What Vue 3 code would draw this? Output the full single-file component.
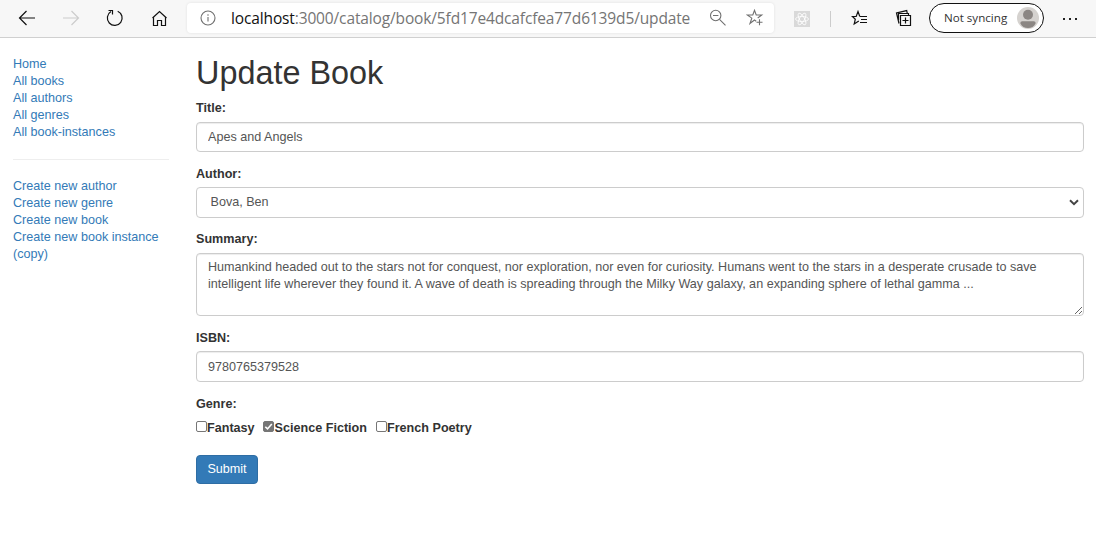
<script setup>
import { ref } from 'vue'

const catalogLinks = ['Home', 'All books', 'All authors', 'All genres', 'All book-instances']
const createLinks = ['Create new author', 'Create new genre', 'Create new book', 'Create new book instance (copy)']
const title = ref('Apes and Angels')
const author = ref('Bova, Ben')
const summary = ref('Humankind headed out to the stars not for conquest, nor exploration, nor even for curiosity. Humans went to the stars in a desperate crusade to save intelligent life wherever they found it. A wave of death is spreading through the Milky Way galaxy, an expanding sphere of lethal gamma ...')
const isbn = ref('9780765379528')
const genres = ref([
  { name: 'Fantasy', checked: false },
  { name: 'Science Fiction', checked: true },
  { name: 'French Poetry', checked: false },
])
</script>

<template>
  <div class="window">
    <header class="toolbar">
      <nav class="nav-icons">
        <svg class="arrow" width="18" height="18" viewBox="0 0 18 18"><path d="M17 9H1.500M8.500 2 1.500 9l7 7" /></svg>
        <svg class="arrow disabled" width="18" height="18" viewBox="0 0 18 18"><path d="M1 9h15.500M9.500 2l7 7-7 7" /></svg>
        <svg width="18" height="18" viewBox="0 0 18 18"><path d="M11.700 2.200A7.400 7.400 0 1 1 5 2.600M2.500 1.500h4v4" /></svg>
        <svg width="18" height="18" viewBox="0 0 18 18"><path d="m2.500 9 7-6.500 7 6.500M3.500 8.200v8.300h4v-5h4v5h4V8.200" /></svg>
      </nav>
      <div class="address">
        <svg class="info" width="16" height="16" viewBox="0 0 16 16"><circle cx="8" cy="8" r="7" /><path d="M8 7v4.500M8 4.300v1.400" /></svg>
        <span class="url"><b>localhost</b>:3000/catalog/book/5fd17e4dcafcfea77d6139d5/update</span>
        <svg class="zoom" width="18" height="18" viewBox="0 0 18 18"><circle cx="6.700" cy="6.500" r="5.200" /><path d="M4 6.500h5.400M10.500 10.300l6 6" /></svg>
        <svg class="star" width="18" height="18" viewBox="0 0 18 18"><path d="M10.200 12.200 8.500 11 4 14.500l1.800-5.400L1.300 6h5.500l1.700-4.700L10.200 6h5.500l-4 3M13.500 10.300v6M10.500 13.300h6" /></svg>
      </div>
      <svg class="react" width="16" height="16" viewBox="0 0 16 16"><path class="tile" d="M0 0h16v16H0z" /><g><ellipse cx="8" cy="8" rx="6.500" ry="2.500" /><ellipse cx="8" cy="8" rx="6.500" ry="2.500" transform="rotate(60 8 8)" /><ellipse cx="8" cy="8" rx="6.500" ry="2.500" transform="rotate(120 8 8)" /></g></svg>
      <i class="divider"></i>
      <svg class="favorites" width="18" height="18" viewBox="0 0 18 18"><path d="M9 7.500h7M10 10.500h6M9 13.500h7M8.800 7.500 7 2.500 5.200 7.500H1.500L4.300 10.200 3.200 15 7.800 12" /></svg>
      <svg class="collections" width="18" height="18" viewBox="0 0 18 18"><path d="M5.500 6.500h10v10h-10zM10.500 8.500v6M7.500 11.500h6M4 14.500 1.500 4l10.200-2.400.5 2.400M3.500 11V4.500h10v2" /></svg>
      <div class="profile">
        <span>Not syncing</span>
        <svg width="22" height="22" viewBox="0 0 22 22"><circle cx="11" cy="11" r="11" fill="#d5d2cf" /><circle cx="11" cy="7.800" r="5" fill="#8b8683" /><path d="M3.300 16.200q0-2 2-2h11.400q2 0 2 2C17 19.700 14.500 21 11 21s-6-1.300-7.700-4.800Z" fill="#8b8683" /></svg>
      </div>
      <svg class="more" width="16" height="4" viewBox="0 0 16 4"><path d="M1 1h2v2H1zM7 1h2v2H7zM13 1h2v2h-2z" /></svg>
    </header>

    <div class="page">
      <aside>
        <ul><li v-for="link in catalogLinks" :key="link"><a>{{ link }}</a></li></ul>
        <hr />
        <ul><li v-for="link in createLinks" :key="link"><a>{{ link }}</a></li></ul>
      </aside>
      <main>
        <h1>Update Book</h1>
        <form @submit.prevent>
          <div class="group title">
            <label for="title">Title:</label>
            <input id="title" v-model="title" class="control" />
          </div>
          <div class="group author">
            <label for="author">Author:</label>
            <div class="select">
              <select id="author" v-model="author" class="control"><option>Bova, Ben</option></select>
              <svg width="10" height="7" viewBox="0 0 10 7"><path d="M1 1.300 5 5.100l4-3.800" /></svg>
            </div>
          </div>
          <div class="group summary">
            <label for="summary">Summary:</label>
            <textarea id="summary" v-model="summary" class="control" spellcheck="false"></textarea>
          </div>
          <div class="group isbn">
            <label for="isbn">ISBN:</label>
            <input id="isbn" v-model="isbn" class="control" />
          </div>
          <div class="group genre">
            <label>Genre:</label>
            <div class="checks">
              <label v-for="g in genres" :key="g.name" class="check">
                <input v-model="g.checked" type="checkbox" />
                <svg width="11" height="11" viewBox="0 0 11 11" :class="{ on: g.checked }"><rect x=".5" y=".5" width="10" height="10" rx="1.500" /><path v-if="g.checked" d="m2.300 5.700 2.200 2.200 4.300-5" /></svg>
                <span>{{ g.name }}</span>
              </label>
            </div>
          </div>
          <button type="submit">Submit</button>
        </form>
      </main>
    </div>
  </div>
</template>

<style>
body { margin: 0; background: #fff; overflow: hidden; }
</style>

<style scoped>
* { box-sizing: border-box; }
.window { height: 537px; overflow: hidden; font: 12.6px/17px "Liberation Sans", Arial, sans-serif; color: #333; }
svg { display: block; flex: none; fill: none; stroke: #111; stroke-width: 1.2; }
.toolbar { height: 38px; display: flex; align-items: center; background: #f7f7f7; border-bottom: 1px solid #d0d0d0; font-family: "Open Sans", "Noto Sans", sans-serif; }
.nav-icons { display: flex; gap: 26px; margin: -1px 0 0 18px; width: 169px; flex: none; }
.nav-icons .arrow { margin-top: -0.5px; }
.disabled { stroke: #ccc; }
.address { display: flex; align-items: center; width: 587px; height: 30px; margin-top: -1px; flex: none; background: #fff; border-radius: 4px; box-shadow: 0 0 3px #00000018; padding-left: 13px; }
.info, .zoom, .star { stroke: #707070; stroke-width: 1.1; }
.info { margin-top: -1px; }
.url { margin: -1px 0 0 15px; width: 464px; flex: none; font-size: 15.5px; line-height: 24px; color: #757575; white-space: nowrap; letter-spacing: -0.135px; }
.url b { font-weight: 400; color: #111; }
.zoom { margin-left: 14px; }
.star { margin-left: 19px; }
.react { margin-left: 20px; stroke: #fff; stroke-width: .8; }
.tile { fill: #d9d9d9; stroke: none; }
.divider { width: 1px; height: 16px; background: #ccc; margin-left: 20px; flex: none; }
.favorites { margin: -1px 0 0 20px; }
.collections { margin: -1px 0 0 26px; }
.profile { flex: none; margin: -2px 0 0 16px; width: 115px; height: 30px; border: 1.500px solid #111; border-radius: 15px; background: #fff; display: flex; align-items: center; justify-content: space-between; padding: 0 4px 0 14px; font-size: 11.600px; color: #333; white-space: nowrap; }
.profile svg { stroke: none; }
.more { margin-left: 18px; fill: #222; stroke: none; }
.page { display: flex; padding: 17px 12px 0 13px; }
aside { width: 156px; margin-right: 27px; padding-top: 1px; flex: none; }
ul { list-style: none; margin: 0; padding: 0; }
a { color: #337ab7; }
hr { border: 0; border-top: 1px solid #eee; margin: 18px 0; }
main { flex: 1; min-width: 0; }
h1 { font-size: 32.4px; line-height: 36px; font-weight: 400; margin: 0; height: 44px; }
.group { display: flex; flex-direction: column; }
.group > label { font-weight: 700; height: 17px; padding-top: 1px; }
.title { height: 66px; }
.author { height: 65px; }
.summary { height: 99px; }
.isbn { height: 66px; }
.title > label { height: 23px; }
.author > label, .isbn > label { height: 22px; }
.summary > label { height: 23px; }
.control { display: block; width: 100%; height: 31px; margin: 0; padding: 0 11px; border: 1px solid #ccc; border-radius: 4px; background: #fff; color: #555; font: inherit; outline: none; box-shadow: inset 0 1px 1px rgba(0,0,0,.075); }
#title { height: 30px; }
textarea.control { height: 63px; padding: 5px 10px 5px 11px; resize: vertical; }
.select { position: relative; }
select.control { appearance: none; padding: 0 14px 1px 13.500px; box-shadow: none; }
.select svg { position: absolute; right: 5px; top: 12px; stroke: #444; stroke-width: 2; }
.genre { height: 60px; }
.checks { display: flex; margin-top: 7px; }
.check { display: flex; align-items: center; font-weight: 700; margin-right: 9px; height: 17px; }
.check:first-child { margin-right: 8px; }
.check:nth-child(2) span { margin-left: 1px; }
.check span { margin-top: 2px; }
.check input { appearance: none; margin: 0; width: 0; height: 0; }
.check svg { margin-top: -2px; stroke: #767676; stroke-width: 1; }
.check .on rect { fill: #767676; }
.check .on path { stroke: #fff; stroke-width: 1.600; }
button { display: block; width: 62px; height: 29px; padding: 0; color: #fff; background: #337ab7; border: 1px solid #2e6da4; border-radius: 4px; font: inherit; }
</style>
